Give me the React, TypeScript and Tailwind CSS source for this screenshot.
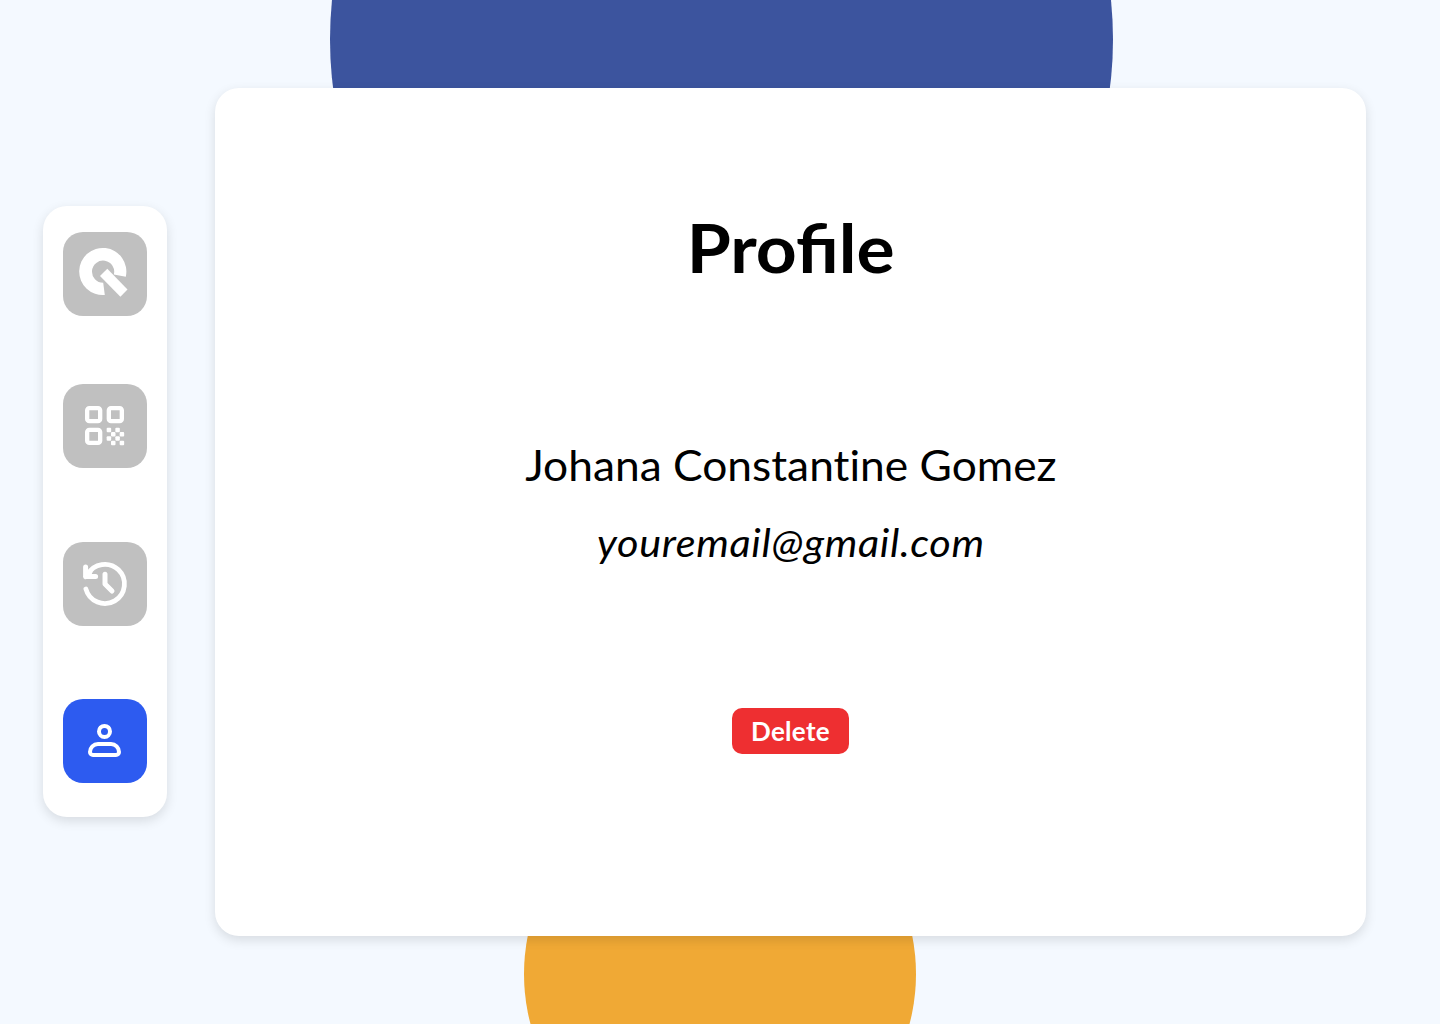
import React from "react";

function SearchMark() {
  return (
    <svg viewBox="0 0 84 84" className="size-21" fill="#fff">
      <path d="M62.8 44.7A23.6 23.6 0 1 0 41.8 63L40.2 50.8A11.1 11.1 0 1 1 50.8 42.6Z" />
      <path d="M44.3 36.7 37 43.9 57.4 64.8 64.5 57.5Z" />
    </svg>
  );
}

function QrMark() {
  const dots = [
    [0, 0], [2, 0], [1, 1], [3, 1], [0, 2], [2, 2], [1, 3], [3, 3],
  ];
  return (
    <svg viewBox="0 0 84 84" className="size-21" fill="#fff">
      {[[22, 22], [43.67, 22], [22, 43.67]].map(([x, y]) => (
        <path
          key={`${x}-${y}`}
          fillRule="evenodd"
          transform={`translate(${x} ${y})`}
          d="M4.33 0H13A4.33 4.33 0 0 1 17.33 4.33V13A4.33 4.33 0 0 1 13 17.33H4.33A4.33 4.33 0 0 1 0 13V4.33A4.33 4.33 0 0 1 4.33 0ZM4.33 4.33V13H13V4.33Z"
        />
      ))}
      {dots.map(([x, y]) => (
        <rect key={`${x}-${y}`} x={43.67 + x * 4.33} y={43.67 + y * 4.33} width="4.5" height="4.5" rx="1" />
      ))}
    </svg>
  );
}

function HistoryMark() {
  return (
    <svg viewBox="0 0 84 84" className="size-21" fill="none" stroke="#fff" strokeLinecap="round" strokeLinejoin="round">
      <path strokeWidth="4.8" d="M22.9 47A19.6 19.6 0 1 0 24.6 32.6" />
      <path strokeWidth="5" d="M22.6 24.9V34.6H32.6M22.6 34.6 27 30" />
      <path strokeWidth="5" d="M42 32.2V41.9L49 49" />
    </svg>
  );
}

function UserMark() {
  return (
    <svg viewBox="0 0 84 84" className="size-21" fill="none" stroke="#fff" strokeWidth="4">
      <circle cx="41.5" cy="32.4" r="5.5" />
      <path d="M35 45H48A8 8 0 0 1 56 53A3 3 0 0 1 53 56H30A3 3 0 0 1 27 53A8 8 0 0 1 35 45Z" />
    </svg>
  );
}

function NavButton({ label, active, children }: { label: string; active?: boolean; children: React.ReactNode }) {
  return (
    <button
      aria-label={label}
      className={`size-21 shrink-0 overflow-hidden rounded-[20px] ${active ? "bg-[#2d5bf0]" : "bg-[#c0c0c0]"}`}
    >
      {children}
    </button>
  );
}

export default function App() {
  return (
    <div className="relative isolate flex h-[1024px] w-[1440px] items-start overflow-hidden bg-[#f4f9ff] pl-[43px] font-['Lato',sans-serif] text-black">
      <div className="absolute -top-[352px] left-[330px] -z-10 size-[783px] rounded-full bg-[#3c549e]" />
      <div className="absolute top-[778px] left-[524px] -z-10 size-[392px] rounded-full bg-[#f0a935]" />

      <nav className="mt-[206px] flex h-[611px] w-[124px] flex-col items-center rounded-3xl bg-white pt-[26px] shadow-[0_4px_12px_rgba(0,0,0,0.12)]">
        <NavButton label="Search"><SearchMark /></NavButton>
        <div className="h-[68px]" />
        <NavButton label="QR codes"><QrMark /></NavButton>
        <div className="h-[74px]" />
        <NavButton label="History"><HistoryMark /></NavButton>
        <div className="h-[73px]" />
        <NavButton label="Profile" active><UserMark /></NavButton>
      </nav>

      <main className="mt-[88px] ml-12 flex h-[848px] w-[1151px] flex-col items-center rounded-3xl bg-white pt-[119px] whitespace-nowrap shadow-[0_4px_12px_rgba(0,0,0,0.12)]">
        <h1 className="scale-x-[1.065] text-[67px] leading-[80px] font-bold">Profile</h1>
        <p className="mt-[153px] scale-x-[1.055] text-[42px] leading-[50px] [font-variant-ligatures:none]">Johana Constantine Gomez</p>
        <p className="mt-[27px] scale-x-[1.09] text-[38px] leading-[50px] tracking-[0.6px] italic">youremail@gmail.com</p>
        <button className="mt-[141px] flex h-[46px] w-[117px] items-center justify-center rounded-[10px] bg-[#ee2f31] text-[26px] font-bold tracking-[0.3px] text-white">
          Delete
        </button>
      </main>
    </div>
  );
}
